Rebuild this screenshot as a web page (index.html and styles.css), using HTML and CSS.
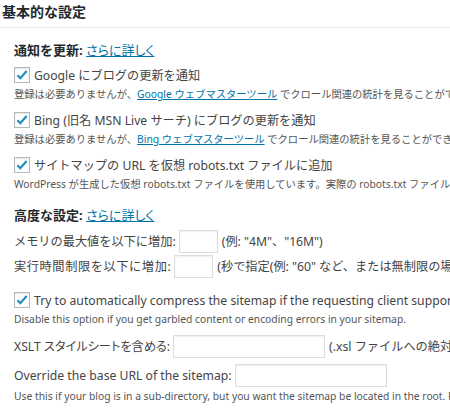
FILE: index.html
```
<!DOCTYPE html>
<html lang="ja">
<head>
    <meta charset="UTF-8">
    <title>基本的な設定</title>
    <link rel="stylesheet" href="styles.css">
</head>
<body>
    <div class="postbox">
        <h2 class="hndle">基本的な設定</h2>
        <div class="inside">
            <ul class="opts">
                <li class="group-head"><b>通知を更新:</b> <a href="#">さらに詳しく</a></li>
                <li class="opt">
                    <label class="check"><span class="cb"><svg viewBox="0 0 16 16"><path d="M2.8 8.2l3.3 3.4 7.2-8.2" /></svg></span> Google にブログの更新を通知</label>
                    <small class="desc">登録は必要ありませんが、<a href="#">Google ウェブマスターツール</a> でクロール関連の統計を見ることができます。</small>
                </li>
                <li class="opt">
                    <label class="check"><span class="cb"><svg viewBox="0 0 16 16"><path d="M2.8 8.2l3.3 3.4 7.2-8.2" /></svg></span> Bing (旧名 MSN Live サーチ) にブログの更新を通知</label>
                    <small class="desc">登録は必要ありませんが、<a href="#">Bing ウェブマスターツール</a> でクロール関連の統計を見ることができます。</small>
                </li>
                <li class="opt">
                    <label class="check"><span class="cb"><svg viewBox="0 0 16 16"><path d="M2.8 8.2l3.3 3.4 7.2-8.2" /></svg></span> サイトマップの URL を仮想 robots.txt ファイルに追加</label>
                    <small class="desc">WordPress が生成した仮想 robots.txt ファイルを使用しています。実際の robots.txt ファイルをブログディレクトリに置かないでください。</small>
                </li>
                <li class="group-head second"><b>高度な設定:</b> <a href="#">さらに詳しく</a></li>
                <li class="field">
                    <label>メモリの最大値を以下に増加:</label>
                    <input type="text" class="small-text">
                    <span>(例: "4M"、"16M")</span>
                </li>
                <li class="field last">
                    <label class="loose">実行時間制限を以下に増加:</label>
                    <input type="text" class="small-text">
                    <span>(秒で指定(例: "60" など、または無制限の場合は "0")</span>
                </li>
                <li class="opt gzip">
                    <label class="check"><span class="cb"><svg viewBox="0 0 16 16"><path d="M2.8 8.2l3.3 3.4 7.2-8.2" /></svg></span> Try to automatically compress the sitemap if the requesting client supports gzip.</label>
                    <small class="desc">Disable this option if you get garbled content or encoding errors in your sitemap.</small>
                </li>
                <li class="field xsl">
                    <label class="tight">XSLT スタイルシートを含める:</label>
                    <input type="text" class="wide-text">
                    <span>(.xsl ファイルへの絶対パスまたは相対パス)</span>
                </li>
                <li class="field base">
                    <label>Override the base URL of the sitemap:</label>
                    <input type="text" class="wide-text">
                </li>
                <li>
                    <small class="desc">Use this if your blog is in a sub-directory, but you want the sitemap be located in the root. Requires .htaccess modification.</small>
                </li>
            </ul>
        </div>
    </div>
</body>
</html>
```

FILE: styles.css
```
body {
    margin: 0;
    background-color: #fff;
    color: #444;
    font-family: "Segoe UI", "Noto Sans", "Noto Sans CJK JP", sans-serif;
    font-size: 12.2px;
    overflow: hidden;
    white-space: nowrap;
}

.hndle {
    margin: 0;
    padding: 3px 2px 6px;
    font-size: 14px;
    line-height: 18px;
    color: #23282d;
    border-bottom: 1px solid #eee;
}

.inside {
    padding: 12px 14px 0;
}

.opts {
    list-style: none;
    margin: 0;
    padding: 0;
}

.opts li {
    margin: 0;
}

a {
    color: #0073aa;
    text-decoration: underline;
}

/* section headings */
.opts .group-head {
    line-height: 20px;
    font-size: 13px;
    margin-bottom: 5px;
}

.group-head b {
    color: #23282d;
}

.group-head a {
    font-feature-settings: "palt";
}

.opts .group-head.second {
    margin-top: 12px;
    margin-bottom: 4px;
}

/* checkbox options */
.opts .opt {
    margin-bottom: 7px;
}

.check {
    display: flex;
    align-items: center;
    height: 20px;
}

.cb {
    width: 16px;
    height: 16px;
    box-sizing: border-box;
    border: 1px solid #b4b9be;
    background-color: #fff;
    box-shadow: inset 0 1px 2px rgba(0, 0, 0, 0.1);
    margin-right: 4px;
    display: flex;
}

.cb svg {
    width: 14px;
    height: 14px;
    fill: none;
    stroke: #1e8cbe;
    stroke-width: 2.5;
}

.desc {
    display: block;
    font-size: 10.3px;
    line-height: 18px;
    color: #555;
}

/* text fields */
.field {
    display: flex;
    align-items: center;
    height: 24px;
}

.loose {
    letter-spacing: 0.6px;
}

.tight {
    font-feature-settings: "palt";
}

.opts .field {
    margin-bottom: 1px;
}

.opts .field.last {
    margin-bottom: 12px;
}

.opts .opt.gzip {
    margin-bottom: 6px;
}

.opts .field.xsl {
    margin-bottom: 5px;
}

.opts .field.base {
    margin-bottom: 0;
}

input[type="text"] {
    margin: 0 4px 0 3px;
    height: 23px;
    box-sizing: border-box;
    border: 1px solid #ddd;
    box-shadow: inset 0 1px 2px rgba(0, 0, 0, 0.07);
    padding: 2px 4px;
    font-size: 13px;
}

.small-text {
    width: 39px;
}

.wide-text {
    width: 152px;
}
```
